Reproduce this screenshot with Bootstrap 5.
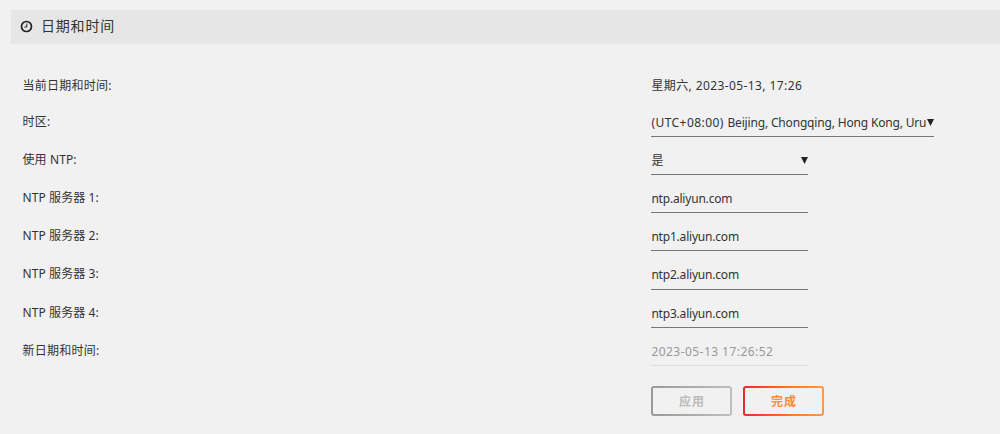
<!DOCTYPE html>
<html lang="zh-CN">
<head>
  <meta charset="UTF-8">
  <meta name="viewport" content="width=device-width, initial-scale=1">
  <title>日期和时间</title>
  <link href="https://cdn.jsdelivr.net/npm/bootstrap@5.3.0/dist/css/bootstrap.min.css" rel="stylesheet">
  <style>
    body {
      background: #f1f1f1;
      color: #333;
      font-family: "Noto Sans", "Noto Sans CJK SC", sans-serif;
      font-size: 12px;
      line-height: 18px;
      overflow: hidden;
    }
    .section-head {
      height: 34px;
      margin: 10px 0 0 11px;
      padding: 0 0 2px 9px;
      background: #e6e6e6;
    }
    .section-head h1 {
      font-size: 14px;
      font-weight: 400;
      letter-spacing: .8px;
      margin-left: 8px;
    }
    .settings { padding: 33px 0 0 22.5px; }
    .setting { height: 38.2px; }
    .setting-first { height: 21.6px; }
    .setting-label { width: 628.9px; letter-spacing: .25px; padding-top: 14px; }
    .ntp-label { letter-spacing: .1px; }
    .setting-first .setting-label { padding-top: 0; }
    .setting-value { letter-spacing: .4px; }
    .field-line {
      width: 156.5px;
      height: 38.2px;
      padding: 15px 0 0;
      border: 0;
      border-bottom: 1px solid #777;
      border-radius: 0;
      background: transparent;
      color: #333;
      font-size: 12px;
      line-height: 18px;
      letter-spacing: .45px;
      white-space: nowrap;
    }
    input.field-line { padding: 10px 0 0; }
    .host-field { letter-spacing: -.2px; }
    .zone-names { letter-spacing: -.17px; }
    .field-wide { width: 282.5px; }
    .field-line:disabled { background: transparent; color: #999; border-color: #ddd; opacity: 1; }
    .arrow { width: 7px; height: 7px; margin-top: 5px; }
    .actions { padding: 20px 0 0 628.9px; gap: 11px; }
    .btn-line {
      width: 81px;
      height: 30px;
      padding: 0;
      border: 2px solid transparent;
      border-radius: 3px;
      font-size: 12px;
      font-weight: 700;
      line-height: 28px;
      letter-spacing: 1px;
    }
    .btn-apply, .btn-apply:disabled {
      color: #bbb;
      opacity: 1;
      border-color: transparent;
      background: linear-gradient(#f1f1f1, #f1f1f1) padding-box, linear-gradient(90deg, #999, #bfbfbf) border-box;
    }
    .btn-done, .btn-done:hover {
      color: #ff8b33;
      background: linear-gradient(#f1f1f1, #f1f1f1) padding-box, linear-gradient(90deg, #e52a30, #ff7a22 60%, #ff9a45) border-box;
    }
  </style>
</head>
<body>
  <div class="section-head d-flex align-items-center">
    <svg width="13" height="13" viewBox="0 0 13 13" fill="none" stroke="#222">
      <circle cx="6.5" cy="6.5" r="5" stroke-width="1.7"/>
      <path d="M6.8 3.5V7H4.3" stroke-width="1"/>
    </svg>
    <h1 class="mb-0">日期和时间</h1>
  </div>

  <form class="settings">
    <div class="setting-first d-flex">
      <div class="setting-label">当前日期和时间:</div>
      <div class="setting-value">星期六, 2023-05-13, 17:26</div>
    </div>
    <div class="setting d-flex">
      <div class="setting-label">时区:</div>
      <div class="field-line field-wide d-flex justify-content-between">
        <span>(UTC+08:00) <span class="zone-names">Beijing, Chongqing, Hong Kong, Uru</span></span>
        <svg class="arrow flex-shrink-0" viewBox="0 0 7 7"><path d="M0 0h7L3.5 7z" fill="#222"/></svg>
      </div>
    </div>
    <div class="setting d-flex">
      <div class="setting-label ntp-label">使用 NTP:</div>
      <div class="field-line d-flex justify-content-between">
        <span>是</span>
        <svg class="arrow flex-shrink-0" viewBox="0 0 7 7"><path d="M0 0h7L3.5 7z" fill="#222"/></svg>
      </div>
    </div>
    <div class="setting d-flex">
      <label class="setting-label ntp-label" for="ntp1">NTP 服务器 1:</label>
      <input type="text" class="form-control field-line host-field" id="ntp1" value="ntp.aliyun.com">
    </div>
    <div class="setting d-flex">
      <label class="setting-label ntp-label" for="ntp2">NTP 服务器 2:</label>
      <input type="text" class="form-control field-line host-field" id="ntp2" value="ntp1.aliyun.com">
    </div>
    <div class="setting d-flex">
      <label class="setting-label ntp-label" for="ntp3">NTP 服务器 3:</label>
      <input type="text" class="form-control field-line host-field" id="ntp3" value="ntp2.aliyun.com">
    </div>
    <div class="setting d-flex">
      <label class="setting-label ntp-label" for="ntp4">NTP 服务器 4:</label>
      <input type="text" class="form-control field-line host-field" id="ntp4" value="ntp3.aliyun.com">
    </div>
    <div class="setting d-flex">
      <label class="setting-label" for="newtime">新日期和时间:</label>
      <input type="text" class="form-control field-line" id="newtime" value="2023-05-13 17:26:52" disabled>
    </div>
    <div class="actions d-flex">
      <button type="button" class="btn btn-line btn-apply" disabled>应用</button>
      <button type="button" class="btn btn-line btn-done">完成</button>
    </div>
  </form>
  <script src="https://cdn.jsdelivr.net/npm/bootstrap@5.3.0/dist/js/bootstrap.bundle.min.js"></script>
</body>
</html>
